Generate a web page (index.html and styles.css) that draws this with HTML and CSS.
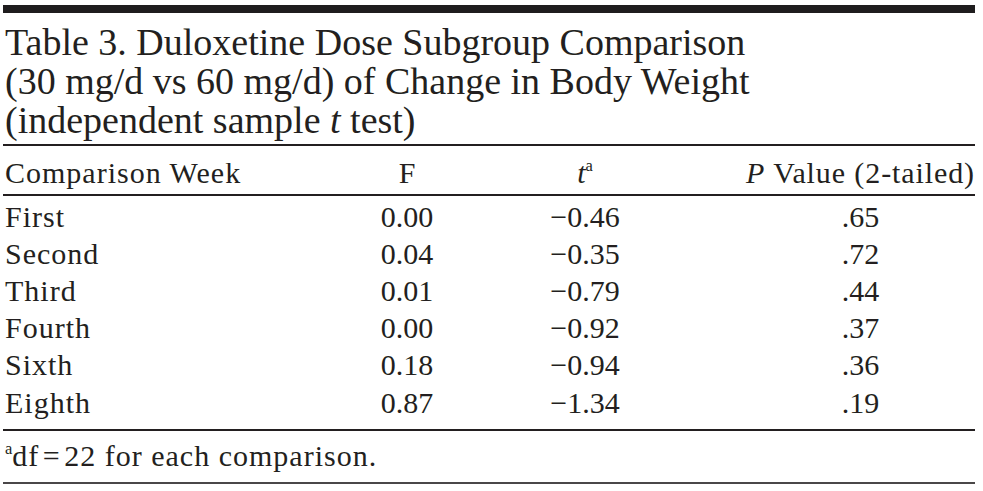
FILE: index.html
```html
<!DOCTYPE html>
<html lang="en">
<head>
<meta charset="utf-8">
<title>Table 3</title>
<link rel="stylesheet" href="styles.css">
</head>
<body>
<div class="sheet">
  <div class="topbar"></div>
  <h1 class="title">Table 3. Duloxetine Dose Subgroup Comparison<br>(30 mg/d vs 60 mg/d) of Change in Body Weight<br>(independent sample <i>t</i> test)</h1>
  <table class="data">
    <colgroup>
      <col class="c-week">
      <col class="c-f">
      <col class="c-t">
      <col class="c-p">
    </colgroup>
    <thead>
      <tr>
        <th class="week">Comparison Week</th>
        <th class="num">F</th>
        <th class="num"><i>t</i><sup>a</sup></th>
        <th class="num pcol"><i>P</i> Value (2-tailed)</th>
      </tr>
    </thead>
    <tbody>
      <tr><td class="week">First</td><td class="num">0.00</td><td class="num">&minus;0.46</td><td class="num pcol">.65</td></tr>
      <tr><td class="week">Second</td><td class="num">0.04</td><td class="num">&minus;0.35</td><td class="num pcol">.72</td></tr>
      <tr><td class="week">Third</td><td class="num">0.01</td><td class="num">&minus;0.79</td><td class="num pcol">.44</td></tr>
      <tr><td class="week">Fourth</td><td class="num">0.00</td><td class="num">&minus;0.92</td><td class="num pcol">.37</td></tr>
      <tr><td class="week">Sixth</td><td class="num">0.18</td><td class="num">&minus;0.94</td><td class="num pcol">.36</td></tr>
      <tr><td class="week">Eighth</td><td class="num">0.87</td><td class="num">&minus;1.34</td><td class="num pcol">.19</td></tr>
    </tbody>
  </table>
  <p class="note"><sup>a</sup>df&#8202;=&#8202;22 for each comparison.</p>
</div>
</body>
</html>
```

FILE: styles.css
```css
html, body {
  margin: 0;
  padding: 0;
  background: #ffffff;
}

body {
  font-family: "Liberation Serif", "Times New Roman", serif;
  color: #231f20;
}

.sheet {
  width: 972px;
  margin-left: 3px;
  padding-top: 5px;
}

.topbar {
  height: 8px;
  background: #1f1d1e;
}

.title {
  margin: 0;
  padding: 10px 0 4px 2px;
  font-weight: normal;
  font-size: 38px;
  line-height: 39px;
  border-bottom: 2.5px solid #231f20;
}

.title i {
  font-style: italic;
}

.data {
  width: 972px;
  border-collapse: collapse;
  table-layout: fixed;
  font-size: 30px;
}

.c-week { width: 327px; }
.c-f { width: 154px; }
.c-t { width: 202px; }
.c-p { width: 289px; }

.data th,
.data td {
  padding: 0;
  font-weight: normal;
  line-height: 37.2px;
  white-space: nowrap;
}

.data thead th {
  padding-top: 8px;
  padding-bottom: 2px;
  line-height: 37.5px;
  border-bottom: 2.5px solid #231f20;
}

.data tbody tr:first-child td {
  padding-top: 2px;
}

.data tbody tr:last-child td {
  padding-bottom: 8px;
  border-bottom: 2.5px solid #231f20;
}

.week {
  text-align: left;
  letter-spacing: 1px;
  padding-left: 2px !important;
}

.num {
  text-align: center;
}

.pcol {
  padding-left: 60px !important;
}

th.pcol {
  letter-spacing: 0.9px;
}

.data sup,
.note sup {
  font-size: 0.55em;
  vertical-align: 0.7em;
  line-height: 0;
  letter-spacing: 0;
}

.note {
  margin: 0;
  padding: 6px 0 8px 2px;
  font-size: 30px;
  line-height: 37.5px;
  letter-spacing: 1px;
  border-bottom: 2px solid #4a4748;
}
```
